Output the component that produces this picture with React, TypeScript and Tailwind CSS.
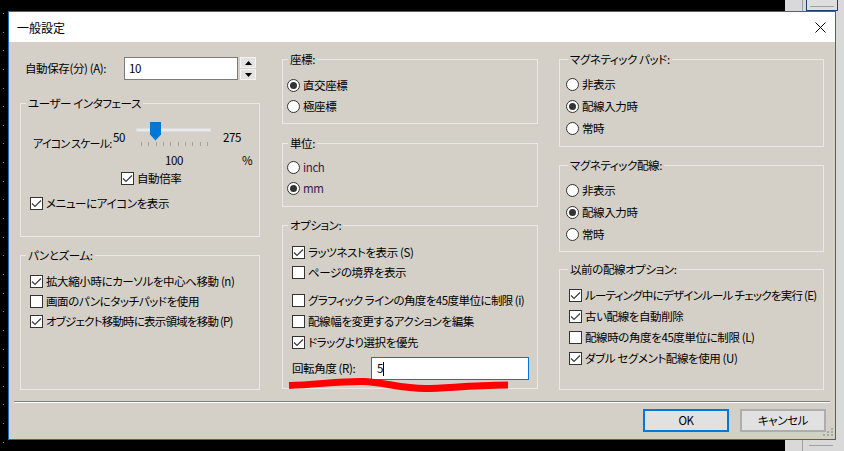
import React from 'react';

const FONT = "font-['Noto_Sans_CJK_JP',sans-serif] [font-feature-settings:'palt']";

function CheckBox({ checked }: { checked?: boolean }) {
  return (
    <span className="w-[13px] h-[13px] shrink-0 border border-[#333333] bg-white flex items-center justify-center">
      {checked && (
        <svg width="11" height="11" viewBox="0 0 11 11">
          <path d="M1 5.5 L4 8.5 L10 2.5" fill="none" stroke="#3c3c3c" strokeWidth="1.2" />
        </svg>
      )}
    </span>
  );
}

function Radio({ checked }: { checked?: boolean }) {
  return (
    <span className="w-[13px] h-[13px] shrink-0 rounded-full border border-[#333333] bg-white flex items-center justify-center">
      {checked && <span className="w-[7px] h-[7px] rounded-full bg-[#333333]" />}
    </span>
  );
}

function CheckRow({ checked, label, className, textClass = '' }: { checked?: boolean; label: string; className: string; textClass?: string }) {
  return (
    <div className={`flex items-center gap-[3px] ${className}`}>
      <CheckBox checked={checked} />
      <span className={`whitespace-nowrap ${textClass}`}>{label}</span>
    </div>
  );
}

function RadioRow({ checked, label, className, textClass = '' }: { checked?: boolean; label: string; className: string; textClass?: string }) {
  return (
    <div className={`flex items-center gap-[3px] ${className}`}>
      <Radio checked={checked} />
      <span className={`whitespace-nowrap ${textClass}`}>{label}</span>
    </div>
  );
}

function Group({ label, className, labelClass = 'left-[5px]', children }: { label: string; className: string; labelClass?: string; children?: React.ReactNode }) {
  return (
    <div className={`relative border border-[#ebe9e5] ${className}`}>
      <span className={`absolute top-[-8px] px-[2px] bg-[#d4d0c8] leading-[15px] whitespace-nowrap ${labelClass}`}>{label}</span>
      {children}
    </div>
  );
}

function SpinBtn({ up }: { up?: boolean }) {
  return (
    <div className="h-[11px] w-[16px] border border-[#f4f4f4] bg-[#e2e2e2] flex items-center justify-center">
      <svg width="7" height="4" viewBox="0 0 7 4">
        {up ? <path d="M0 4 L3.5 0 L7 4 Z" fill="#000" /> : <path d="M0 0 L3.5 4 L7 0 Z" fill="#000" />}
      </svg>
    </div>
  );
}

function Slider() {
  return (
    <div className="relative w-[75px] h-[24px] shrink-0">
      <div className="absolute left-0 top-[6px] w-[75px] h-[4px] bg-[#e9e9e9] border border-[#dcdcdc]" />
      <svg className="absolute left-[14px] top-0" width="11" height="19" viewBox="0 0 11 19">
        <path d="M0 0 H11 V12.5 L5.5 18.5 L0 12.5 Z" fill="#0078d7" />
      </svg>
      <div className="absolute left-[5px] top-[20px] w-[67px] h-[4px] flex justify-between">
        {Array.from({ length: 10 }).map((_, i) => (
          <span key={i} className="w-[1px] h-[4px] bg-[#a3a3a3]" />
        ))}
      </div>
    </div>
  );
}

export default function App() {
  return (
    <div className={`relative w-[844px] h-[451px] bg-black overflow-hidden text-[11.5px] tracking-[-0.4px] leading-[15px] text-black ${FONT}`}>
      {/* desktop edge */}
      <div className="absolute left-[3px] top-[13px] flex flex-col gap-[17.65px]">
        {Array.from({ length: 24 }).map((_, i) => (
          <span key={i} className="w-[1px] h-[1px] bg-[#8a8a8a]" />
        ))}
      </div>

      {/* window behind, right side */}
      <div className="absolute left-[785px] top-0 w-[59px] h-[451px] bg-[#d9d9d9]">
        <div className="absolute left-[17px] top-0 w-[1px] h-[451px] bg-[#a0a0a0]" />
        <div className="absolute left-[21px] top-[-2px] w-[32px] h-[13px] border border-[#1d3f72] bg-[#dedede]">
          <div className="mt-[7px] mx-[3px] h-[1px] bg-[#a0a0a0]" />
        </div>
        <div className="absolute left-[24px] top-[445px] w-[24px] h-[1px] bg-[#a0a0a0]" />
      </div>

      {/* dialog */}
      <div className="absolute left-[8px] top-[11px] w-[828px] h-[429px] border border-[#1c6ec2] bg-[#d4d0c8] flex flex-col">
        <div className="h-[30px] shrink-0 bg-white flex items-center justify-between pl-[8px] pr-[9px]">
          <span className="text-[12px] tracking-normal">一般設定</span>
          <svg width="11" height="11" viewBox="0 0 11 11">
            <path d="M0.5 0.5 L10.5 10.5 M10.5 0.5 L0.5 10.5" stroke="#000" strokeWidth="1" />
          </svg>
        </div>

        <div className="h-[359px] shrink-0 flex pl-[11px]">
          {/* left column */}
          <div className="w-[240px] flex flex-col">
            <div className="mt-[15px] h-[23px] flex items-center">
              <span className="ml-[5px] w-[99px] whitespace-nowrap">自動保存(分) (A):</span>
              <div className="w-[114px] h-[23px] border border-[#7a7a7a] bg-white flex items-center pl-[4px]">10</div>
              <div className="ml-[2px] w-[16px] h-[23px] flex flex-col gap-[1px]">
                <SpinBtn up />
                <SpinBtn />
              </div>
            </div>

            <Group label="ユーザー インタフェース" className="mt-[23px] h-[134px]">
              <div className="flex items-start h-[24px] mt-[18px]">
                <span className="ml-[12px] w-[80px] mt-[14px] whitespace-nowrap text-[11px] tracking-[-0.8px]">アイコン&nbsp;スケール:</span>
                <span className="w-[23px] mt-[8px]">50</span>
                <Slider />
                <span className="ml-[12px] mt-[8px]">275</span>
              </div>
              <div className="flex h-[15px] mt-[7px]">
                <span className="ml-[144px] w-[77px]">100</span>
                <span>%</span>
              </div>
              <CheckRow checked label="自動倍率" className="h-[20px] ml-[100px]" />
              <CheckRow checked label="メニューにアイコンを表示" className="h-[20px] ml-[9px] mt-[5px]" />
            </Group>

            <Group label="パンとズーム:" className="mt-[18px] h-[135px] pt-[15px]">
              <CheckRow checked label="拡大縮小時にカーソルを中心へ移動 (n)" className="h-[20px] ml-[9px]" />
              <CheckRow label="画面のパンにタッチパッドを使用" className="h-[20px] ml-[9px]" />
              <CheckRow checked label="オブジェクト移動時に表示領域を移動 (P)" className="h-[20px] ml-[9px]" textClass="tracking-[-0.8px]" />
            </Group>
          </div>

          {/* middle column */}
          <div className="ml-[22px] w-[256px] flex flex-col">
            <Group label="座標:" className="mt-[17px] h-[65px] pt-[15px]">
              <RadioRow checked label="直交座標" className="h-[21px] ml-[4px]" />
              <RadioRow label="極座標" className="h-[21px] ml-[4px]" />
            </Group>

            <Group label="単位:" className="mt-[19px] h-[64px] pt-[13px]">
              <RadioRow label="inch" className="h-[21px] ml-[4px]" textClass="text-[#3d1a4d]" />
              <RadioRow checked label="mm" className="h-[21px] ml-[4px]" textClass="text-[#3d1a4d]" />
            </Group>

            <Group label="オプション:" className="mt-[18px] h-[164px] pt-[16px]">
              <CheckRow checked label="ラッツネストを表示 (S)" className="h-[20px] ml-[9px]" />
              <CheckRow label="ページの境界を表示" className="h-[20px] ml-[9px]" />
              <CheckRow label="グラフィック ラインの角度を45度単位に制限 (i)" className="h-[21px] ml-[9px] mt-[8px]" textClass="tracking-[-0.55px]" />
              <CheckRow label="配線幅を変更するアクションを編集" className="h-[21px] ml-[9px]" />
              <CheckRow checked label="ドラッグより選択を優先" className="h-[21px] ml-[9px]" />
              <div className="flex items-center h-[23px] mt-[4px]">
                <span className="ml-[9px] w-[79px] whitespace-nowrap">回転角度 (R):</span>
                <div className="w-[158px] h-[23px] border border-[#0078d7] bg-white flex items-center pl-[5px]">
                  <span>5</span>
                  <span className="w-[1px] h-[14px] bg-black" />
                </div>
              </div>
              <svg className="absolute left-[4px] top-[150px]" width="224" height="18" viewBox="0 0 224 18">
                <path
                  d="M2 9.5 C 30 8.5, 55 5, 76 5.5 C 95 6, 115 12.5, 138 12.5 C 160 12.5, 178 9.5, 221 9"
                  fill="none"
                  stroke="#ff0000"
                  strokeWidth="7"
                />
              </svg>
            </Group>
          </div>

          {/* right column */}
          <div className="ml-[21px] w-[265px] flex flex-col">
            <Group label="マグネティック パッド:" labelClass="left-[8px]" className="mt-[17px] h-[88px] pt-[13px]">
              <RadioRow label="非表示" className="h-[22px] ml-[6px]" />
              <RadioRow checked label="配線入力時" className="h-[22px] ml-[6px]" />
              <RadioRow label="常時" className="h-[22px] ml-[6px]" />
            </Group>

            <Group label="マグネティック配線:" labelClass="left-[8px]" className="mt-[18px] h-[87px] pt-[13px]">
              <RadioRow label="非表示" className="h-[22px] ml-[6px]" />
              <RadioRow checked label="配線入力時" className="h-[22px] ml-[6px]" />
              <RadioRow label="常時" className="h-[22px] ml-[6px]" />
            </Group>

            <Group label="以前の配線オプション:" labelClass="left-[8px]" className="mt-[17px] h-[121px] pt-[15px]">
              <CheckRow checked label="ルーティング中にデザインルール チェックを実行 (E)" className="h-[21px] ml-[9px]" textClass="tracking-[-0.75px]" />
              <CheckRow checked label="古い配線を自動削除" className="h-[21px] ml-[9px]" />
              <CheckRow label="配線時の角度を45度単位に制限 (L)" className="h-[21px] ml-[9px]" />
              <CheckRow checked label="ダブル セグメント配線を使用 (U)" className="h-[21px] ml-[9px]" />
            </Group>
          </div>
        </div>

        <div className="mx-[5px] h-[2px] border-t border-t-[#808080] border-b border-b-white" />

        <div className="flex justify-end gap-[11px] pr-[9px] mt-[6px]">
          <button className="w-[86px] h-[23px] border-2 border-[#0078d7] bg-[#e1e1e1] flex items-center justify-center leading-[15px]">
            OK
          </button>
          <button className="w-[86px] h-[23px] border-2 border-[#adadad] bg-[#e1e1e1] flex items-center justify-center leading-[15px]">
            キャンセル
          </button>
        </div>

        <svg className="absolute left-[814px] top-[416px]" width="10" height="8" viewBox="0 0 10 8">
          <rect x="8" y="0" width="2" height="2" fill="#a8a8a8" />
          <rect x="4" y="3" width="2" height="2" fill="#a8a8a8" />
          <rect x="8" y="3" width="2" height="2" fill="#a8a8a8" />
          <rect x="0" y="6" width="2" height="2" fill="#a8a8a8" />
          <rect x="4" y="6" width="2" height="2" fill="#a8a8a8" />
          <rect x="8" y="6" width="2" height="2" fill="#a8a8a8" />
        </svg>
      </div>
    </div>
  );
}
